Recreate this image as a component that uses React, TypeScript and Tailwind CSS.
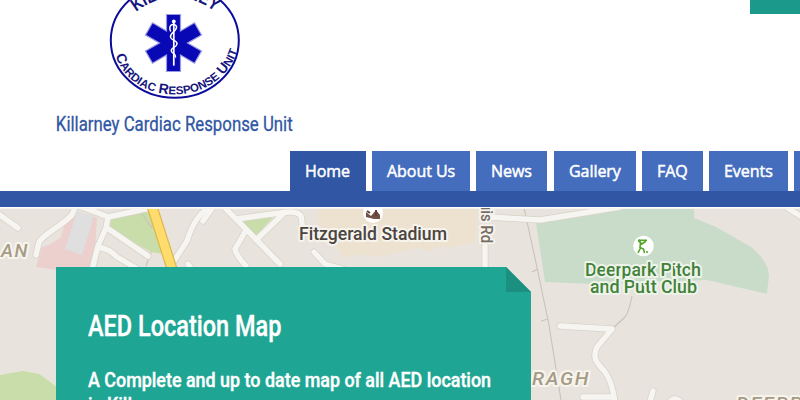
import React from "react";

const tabs = [
  { label: "Home", box: "w-[76px] mr-1.5 bg-[#3056a4]" },
  { label: "About Us", box: "w-[98px] mr-1.5 bg-[#456dbd]" },
  { label: "News", box: "w-[71px] mr-[7px] bg-[#456dbd]" },
  { label: "Gallery", box: "w-[82px] mr-1.5 bg-[#456dbd]" },
  { label: "FAQ", box: "w-[61px] mr-1.5 bg-[#456dbd]" },
  { label: "Events", box: "w-[79px] mr-1.5 bg-[#456dbd]" },
  { label: "", box: "w-[90px] bg-[#456dbd]" },
];

function Logo() {
  return (
    <svg className="ml-[54px] block h-[100px] w-[132px]" viewBox="109 0 132 100" fill="#0808b4">
      <defs>
        <path id="lower" d="M113 47 C119 78 145 94.5 175 94.5 C205 94.5 232 76 239 45" />
        <path id="upper" d="M136 12 C147 3 160 -2 175 -2 C190 -2 203 2 215 12" />
      </defs>
      <ellipse cx="174.8" cy="40.5" rx="64" ry="57.2" fill="none" stroke="#0b0b9c" strokeWidth="2" />
      <g fontFamily="Liberation Sans, Arial, sans-serif" fontWeight="700" fill="#15157d">
        <text fontSize="18">
          <textPath href="#upper" startOffset="0" textLength="85" lengthAdjust="spacingAndGlyphs">KILLARNEY</textPath>
        </text>
        <text fontSize="14">
          <textPath href="#lower" startOffset="9" textLength="158" lengthAdjust="spacingAndGlyphs">
            C<tspan fontSize="11.5">ARDIAC</tspan> R<tspan fontSize="11.5">ESPONSE</tspan> U<tspan fontSize="11.5">NIT</tspan>
          </textPath>
        </text>
      </g>
      <path d="M166.5 14.5H180.5V31L194.5 22.8L201.5 35L187.5 43L201.5 51L194.5 63.2L180.5 55V71.5H166.5V55L152.5 63.2L145.5 51L159.5 43L145.5 35L152.5 22.8L166.5 31Z" stroke="#9a9ae2" strokeWidth="1.2" />
      <g fill="none" stroke="#fff" strokeLinecap="round">
        <path d="M173.8 21V65" strokeWidth="1.7" />
        <path d="M170.5 31C167.5 24 175 23 176.5 26.5C177 31 170 33 170.5 37C171 41 177.5 40 177 44C176.5 48 171 47 171.3 51C171.8 54 176 53 175.5 57" strokeWidth="1.5" />
      </g>
      <circle cx="173.8" cy="21.5" r="1.9" fill="#fff" />
    </svg>
  );
}

const roads = [
  "M-3 213L18 228",
  "M76 205L72 215C60 227 44 234 39 242L36 255",
  "M76 205C91 210 101 214 108 217L150 208",
  "M108 217L106 228L98 246L92 270",
  "M107 228L148 256",
  "M98 247C108 249 112 252 117 257L136 268",
  "M212 205C198 214 192 225 187 241L172 264",
  "M213 207L203 221",
  "M222 205L236 219L280 264",
  "M236 219L280 213Q297 210 301 216L303 230",
  "M256 240L283 214",
  "M245 232L235 249Q236 255 246 266",
  "M188 264L192 270",
  "M314 252L325 264L346 270",
  "M485 246V270",
  "M490 217L540 220L620 207",
  "M786 207L805 219",
  "M560 326L612 329L597 347C591 359 599 365 605 372Q613 383 615 405",
  "M583 397H614",
  "M653 391L649 405",
  "M670 402Q674 396 681 402",
];

function TownMap() {
  return (
    <svg className="absolute inset-0 h-full w-full" viewBox="0 208 800 192" preserveAspectRatio="none">
      <rect y="208" width="800" height="192" fill="#e8e4dd" />
      <path d="M67 215L97 217L94 270H58L36 267L42 247L51 244L61 237Z" fill="#ecd0ce" />
      <path d="M77 212L94 215L82 255L65 249Z" fill="#dfdfdf" />
      <path d="M111 218L141 209H150L163 254L151 252L110 229Z" fill="#c8dda9" />
      <path d="M241 221L274 216L255 237Z" fill="#c8dda9" />
      <path d="M0 375L23 371L39 374L57 387V400H0Z" fill="#c8dda9" />
      <path d="M318 208H478L476 242L452 247L438 246L430 252L420 248L375 257L360 254L344 258L337 248L330 244L318 221Z" fill="#ece2cf" />
      <path d="M536 223L625 208H694V218L716 227L751 247Q768 261 769 275L767 294L707 280L590 284L545 282Z" fill="#c9dcca" />
      <g fill="none" stroke="#c8c3b8" strokeWidth="1.1">
        <path d="M524 208L535 258L549 325L561 400M532 272L538 269M541 321L548 319M632 296Q629 312 625 317L612 329M140 211L152 228M151 252L146 266" />
      </g>
      <g fill="none" strokeLinecap="round" strokeLinejoin="round">
        {roads.map((d) => <path key={d} d={d} stroke="#d9d3c9" strokeWidth="7" />)}
        {roads.map((d) => <path key={d} d={d} stroke="#f7f5f1" strokeWidth="5.4" />)}
        <path d="M151 203L172 269" stroke="#dfb650" strokeWidth="11" />
        <path d="M151 203L172 269" stroke="#ffdc6b" strokeWidth="8.5" />
      </g>
      <rect y="208" width="800" height="1" fill="#f5f2ef" />
      <circle cx="373" cy="213" r="10" fill="#fff" />
      <path d="M366 212L371 216L376 210L380 215V219H374L366 217Z" fill="#705044" />
      <path d="M367 211L370 213M376 210V216" stroke="#604038" strokeWidth="2" />
      <circle cx="643.5" cy="246" r="10.3" fill="#fff" />
      <g fill="none" stroke="#53a526" strokeWidth="1.6">
        <path d="M638 240.2H647M639 241L642 244L646 241M640.5 243L640 247.5L643.5 249L644.5 253M640.5 248L638 253" />
      </g>
      <circle cx="639.5" cy="241" r="1.5" fill="#53a526" />
      <circle cx="647" cy="252" r="1" fill="#53a526" />
      <g fontFamily="Roboto, sans-serif" stroke="#f7f4ee" strokeWidth="4" strokeLinejoin="round" paintOrder="stroke" fontWeight="500">
        <text x="299" y="240" fontSize="18.5" fontWeight="500" fill="#4b4541" textLength="148" lengthAdjust="spacingAndGlyphs">Fitzgerald Stadium</text>
        <text transform="translate(481 202) rotate(90)" fontSize="16.5" fontWeight="500" fill="#756d67" textLength="41" lengthAdjust="spacingAndGlyphs">uis Rd</text>
        <g fill="#41813a" stroke="#eef3e9">
          <text x="585" y="275.5" fontSize="18" textLength="116">Deerpark Pitch</text>
          <text x="590" y="292.5" fontSize="18" textLength="107">and Putt Club</text>
        </g>
        <g fill="#a69b85" fontStyle="italic">
          <text x="1" y="257" fontSize="18" letterSpacing="1.5" textLength="28" lengthAdjust="spacingAndGlyphs">AN</text>
          <text x="532" y="385" fontSize="18" letterSpacing="1.5" textLength="58" lengthAdjust="spacingAndGlyphs">RAGH</text>
          <text x="736" y="410" fontSize="18" letterSpacing="1.5" textLength="108" lengthAdjust="spacingAndGlyphs">DEERPARK</text>
        </g>
      </g>
    </svg>
  );
}

export default function App() {
  return (
    <div className="flex h-[400px] w-[800px] flex-col overflow-hidden bg-white font-['Roboto',sans-serif]">
      <header className="flex h-[151px] shrink-0 justify-between">
        <div className="ml-[55px]">
          <Logo />
          <h1 className="mt-3 w-max origin-left scale-x-[0.84] pl-px text-[20px] leading-6 font-normal text-[#3056a4] [-webkit-text-stroke:0.3px_#3056a4]">
            Killarney Cardiac Response Unit
          </h1>
        </div>
        <div className="h-3.5 w-[50px] bg-[#1b998b]" />
      </header>
      <nav className="flex h-14 shrink-0 border-b-[16px] border-[#3056a4] pl-[290px] font-['Open_Sans',sans-serif] text-base text-white">
        {tabs.map((tab) => (
          <a key={tab.label} className={`flex h-10 shrink-0 items-center pl-[15px] ${tab.box}`}>
            <span className="w-max whitespace-nowrap tracking-[-0.05px] [-webkit-text-stroke:0.5px_white]">{tab.label}</span>
          </a>
        ))}
      </nav>
      <main className="relative mt-px flex h-48 shrink-0 overflow-hidden">
        <TownMap />
        <section className="relative mt-[59px] ml-14 h-[180px] w-[475px] bg-[#1ea593] pt-[41px] pl-8 text-white [clip-path:polygon(0_0,450px_0,475px_25px,475px_100%,0_100%)]">
          <div className="absolute top-0 right-0 h-[25px] w-[25px] bg-[#1b9080]" />
          <h2 className="w-max origin-left scale-x-[0.81] text-[29px] leading-9 font-medium [-webkit-text-stroke:0.4px_white]">AED Location Map</h2>
          <p className="mt-[24px] w-max origin-left scale-x-[0.895] text-[20px] leading-[25px] font-medium [-webkit-text-stroke:0.4px_white]">
            A Complete and up to date map of all AED location<br />in Killarney
          </p>
        </section>
      </main>
    </div>
  );
}
